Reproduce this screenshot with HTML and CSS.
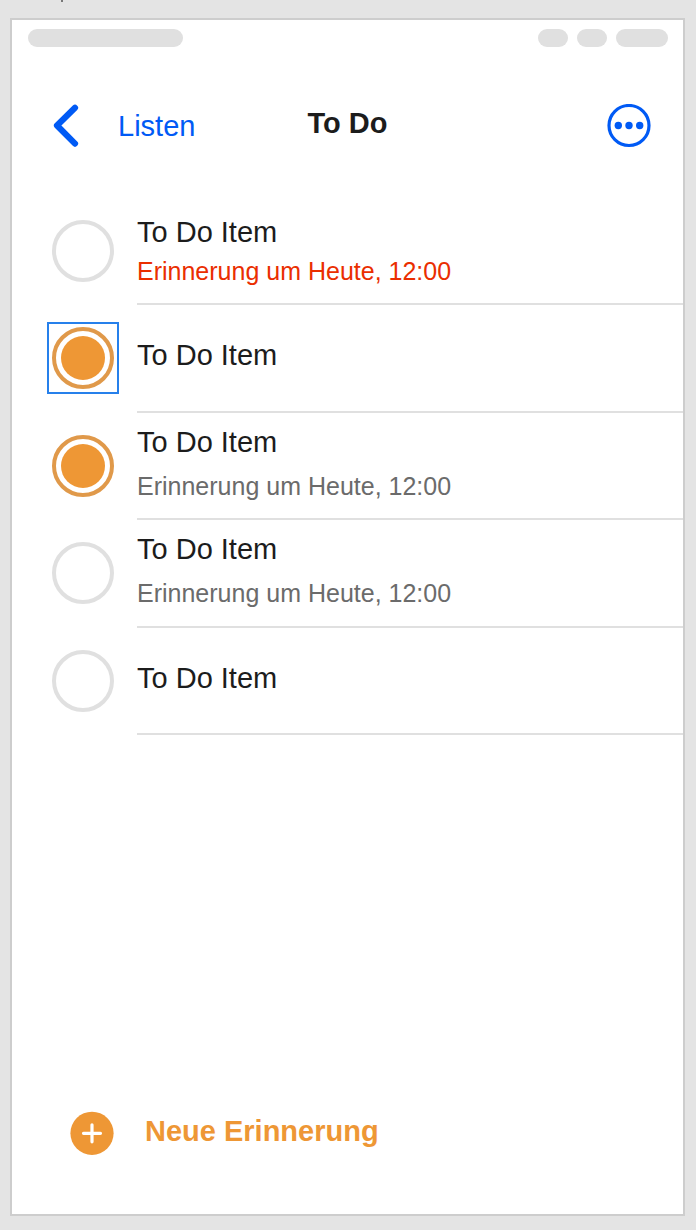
FILE: index.html
```html
<!DOCTYPE html>
<html lang="de">
<head>
<meta charset="utf-8">
<meta name="viewport" content="width=device-width, initial-scale=1">
<title>To Do</title>
<link rel="stylesheet" href="styles.css">
</head>
<body class="canvas">
<div class="canvas-tick"></div>
<main class="artboard">
  <div class="status-bar">
    <span class="pill pill-wide"></span>
    <span class="pill pill-small pill-push"></span>
    <span class="pill pill-small"></span>
    <span class="pill pill-medium"></span>
  </div>
  <header class="nav">
    <a class="back" href="#listen">
      <svg class="back-icon" viewBox="0 0 26 44" aria-hidden="true"><path d="M22 3.8 4 21.5 22 39.6" fill="none" stroke="currentColor" stroke-width="6.2" stroke-linecap="round" stroke-linejoin="round"/></svg>
      <span>Listen</span>
    </a>
    <h1 class="title">To Do</h1>
    <button class="more" type="button" aria-label="Mehr">
      <svg class="round-icon" viewBox="0 0 44 44" aria-hidden="true"><circle cx="22" cy="21.5" r="20" fill="none" stroke="currentColor" stroke-width="3.2"/><circle cx="11.3" cy="21.5" r="3.7" fill="currentColor"/><circle cx="22" cy="21.5" r="3.7" fill="currentColor"/><circle cx="32.7" cy="21.5" r="3.7" fill="currentColor"/></svg>
    </button>
  </header>
  <ul class="list">
    <li class="item">
      <input class="check" type="checkbox" id="todo-1">
      <label class="item-text item-due" for="todo-1"><span class="item-title">To Do Item</span><span class="item-note">Erinnerung um Heute, 12:00</span></label>
    </li>
    <li class="item">
      <input class="check check-selected" type="checkbox" id="todo-2" checked>
      <label class="item-text" for="todo-2"><span class="item-title">To Do Item</span></label>
    </li>
    <li class="item">
      <input class="check" type="checkbox" id="todo-3" checked>
      <label class="item-text" for="todo-3"><span class="item-title">To Do Item</span><span class="item-note">Erinnerung um Heute, 12:00</span></label>
    </li>
    <li class="item">
      <input class="check" type="checkbox" id="todo-4">
      <label class="item-text" for="todo-4"><span class="item-title">To Do Item</span><span class="item-note">Erinnerung um Heute, 12:00</span></label>
    </li>
    <li class="item">
      <input class="check" type="checkbox" id="todo-5">
      <label class="item-text" for="todo-5"><span class="item-title">To Do Item</span></label>
    </li>
  </ul>
  <footer class="footer">
    <button class="add" type="button">
      <svg class="round-icon" viewBox="0 0 44 44" aria-hidden="true"><circle cx="22" cy="22.3" r="21.6" fill="currentColor"/><path d="M22 13.8v17M13.5 22.3h17" fill="none" stroke="#fff" stroke-width="3.2" stroke-linecap="round"/></svg>
      <span class="add-label">Neue Erinnerung</span>
    </button>
  </footer>
</main>
</body>
</html>
```
FILE: styles.css
```css
* {
  box-sizing: border-box;
}

.canvas {
  margin: 0;
  min-height: 100vh;
  display: flex;
  flex-direction: column;
  padding: 0 11px 14px 10px;
  background: #e4e4e4;
  color: #1c1c1c;
  font-family: "Liberation Sans", Arial, sans-serif;
  font-size: 29px;
  line-height: 34px;
}

.canvas-tick {
  width: 2px;
  height: 2px;
  margin: 0 0 16px 51px;
  background: #777;
}

.artboard {
  flex: 1;
  display: flex;
  flex-direction: column;
  border: 2px solid #cdcdcd;
  background: #fff;
}

.status-bar {
  display: flex;
  gap: 9px;
  padding: 9px 15px 0 16px;
}

.pill {
  height: 18px;
  border-radius: 9px;
  background: #e0e0e0;
}

.pill-wide {
  width: 155px;
}

.pill-small {
  width: 30px;
}

.pill-medium {
  width: 52px;
}

.pill-push {
  margin-left: auto;
}

.nav {
  display: grid;
  grid-template-columns: 1fr auto 1fr;
  align-items: center;
  padding: 57px 32px 50px;
  color: #005af5;
}

.back {
  display: flex;
  align-items: center;
  gap: 39px;
  padding-left: 9px;
  color: inherit;
  text-decoration: none;
}

.back-icon {
  width: 26px;
  height: 44px;
}

.title {
  margin: 0;
  padding-bottom: 6px;
  color: #1c1c1c;
  font-size: 29px;
  font-weight: bold;
}

.more,
.add {
  display: flex;
  align-items: center;
  padding: 0;
  border: 0;
  background: none;
  color: inherit;
  font: inherit;
}

.more {
  justify-self: end;
}

.round-icon {
  width: 44px;
  height: 44px;
}

.list {
  margin: 0;
  padding: 0 0 0 40px;
  list-style: none;
}

.item {
  display: flex;
  align-items: center;
  gap: 23px;
  min-height: 107px;
}

.item:nth-child(even) {
  min-height: 108px;
}

.check {
  appearance: none;
  flex: none;
  width: 62px;
  height: 62px;
  margin: 0 0 2px;
  border: 4px solid #e0e0e0;
  border-radius: 50%;
}

.check:checked {
  padding: 5px;
  border-color: #e0994a;
  background: #ee9735 content-box;
}

.check-selected {
  position: relative;
}

.check-selected::after {
  content: "";
  position: absolute;
  inset: -9px;
  border: 2px solid #2680eb;
}

.item-text {
  flex: 1;
  align-self: stretch;
  display: flex;
  flex-direction: column;
  justify-content: center;
  gap: 12px;
  padding-bottom: 6px;
  border-bottom: 2px solid #e0e0e0;
}

.item-due {
  gap: 7px;
  padding-bottom: 0;
}

.item-note {
  color: #6b6b6b;
  font-size: 25px;
  line-height: 30px;
}

.item-due .item-note {
  color: #ea2e00;
}

.footer {
  margin-top: auto;
  padding: 0 58px 59px;
  color: #ee9735;
}

.add {
  gap: 31px;
  font-weight: bold;
}

.add-label {
  padding-bottom: 4px;
}
```
